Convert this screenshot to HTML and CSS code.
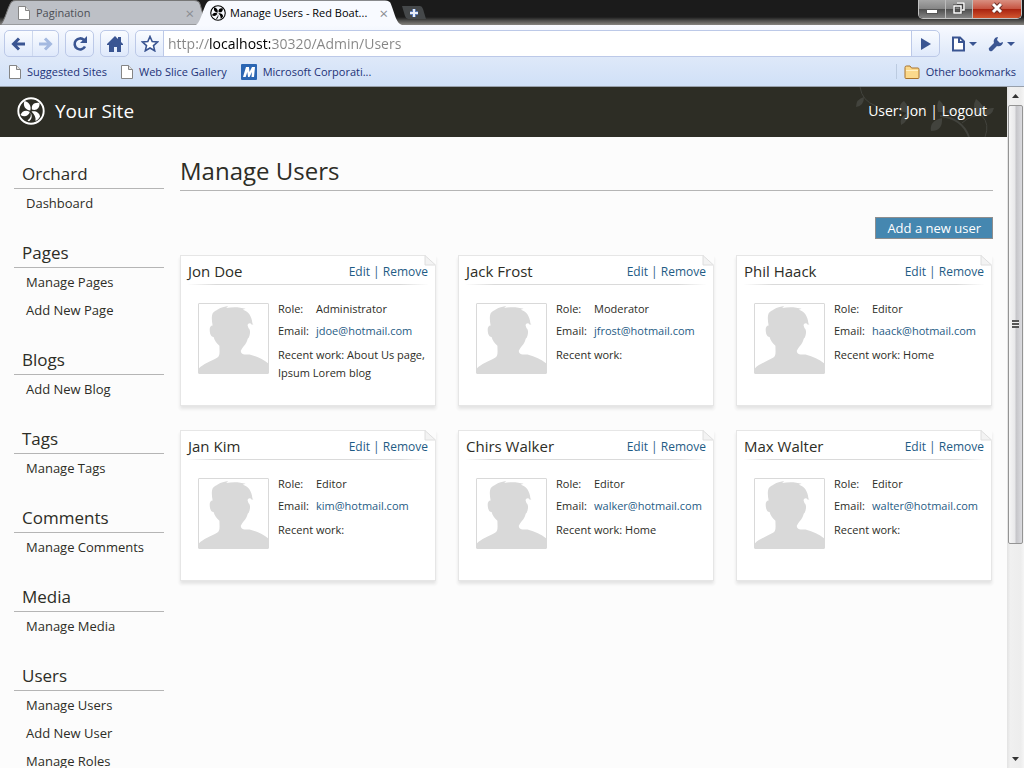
FILE: index.html
```html
<!DOCTYPE html>
<html lang="en">
<head>
<meta charset="utf-8">
<title>Manage Users - Red Boat</title>
<link rel="stylesheet" href="styles.css">
</head>
<body>
<svg class="sprite" aria-hidden="true">
  <symbol id="page" viewBox="0 0 12 14"><path d="M.5.5h7l4 4v9H.5z" fill="#fff" stroke="#858585"/><path d="M7.5.5v4h4" fill="#e4e4e4" stroke="#858585"/></symbol>
  <symbol id="orchard" viewBox="0 0 28 28"><circle cx="14" cy="14" r="12.7" fill="none" stroke="currentColor" stroke-width="1.9"/><g fill="currentColor"><path d="M13.300 13.500C8.500 13 5.500 9 7.500 4c4.500 1 7 5 5.800 9.500z"/><path d="M15 12.500C14 8 17 5 22.500 6c.5 5-3 8-7.500 6.500z"/><path d="M12.800 15c-1 4-5.500 5.500-9.300 3 1.500-4 5.500-5.500 9.300-3z"/><path d="M14.500 14.500c4-1 8 1 8.500 5-1 2-2.500 3.500-4.500 4.500.5-4-1-6.500-4-9.500z"/><path d="M13.500 15.500c1 3 0 6-3 8l1.500.8c3-2 3.500-5.500 1.500-8.800z"/></g></symbol>
  <symbol id="avatar" viewBox="0 0 71 71"><path fill="#d9d9d9" d="M0 71v-5c4-4 12-7 19-11 3-2 2-7 2-12-3-3-5-5-6-9-3 0-4-4-4-8 0-2 1-4 3-4-1-6-2-13 3-15 3-2 6-4 13-5l-2 2c7-1 14-1 20 1l-3 1c6 2 9 6 10 14l1 1h-2c-1-2-4-1-4 1l1 3c2 1 2 6 0 10-1 0-1 2-2 4-2 4-4 5-6 9 0 4 4 4 9 4 8 2 14 5 19 9v10z"/></symbol>
  <symbol id="fold" viewBox="0 0 12 11"><path d="M1 0h11v11z" fill="#fcfcfc"/><path d="M1 .5v9.500h10.500z" fill="#f3f3f3" stroke="#dedede"/></symbol>
</svg>

<header class="titlebar">
  <div class="tabs">
    <button class="tab">
      <svg class="tab-shape" viewBox="0 0 206 24" preserveAspectRatio="none"><path d="M0 24C5 22 8 4 12 1.500Q13 .5 16 .5H194Q199 .5 200 4L206 24z" fill="#bdc0c6" stroke="#777"/></svg>
      <svg class="ico-page"><use href="#page"/></svg><span class="tab-title">Pagination</span><span class="tab-x">×</span>
    </button>
    <button class="tab tab-active">
      <svg class="tab-shape" viewBox="0 0 206 24" preserveAspectRatio="none"><path d="M0 24C5 22 8 4 12 1.500Q13 .5 16 .5H189Q194 .5 195 4C199 14 200 22 206 24z" fill="#f8faff"/></svg>
      <svg class="ico-fav"><use href="#orchard"/></svg><span class="tab-title">Manage Users - Red Boat...</span><span class="tab-x">×</span>
    </button>
    <button class="new-tab" aria-label="New tab"><svg width="24" height="15" viewBox="0 0 24 15"><path d="M0 1h18q2 0 3 3l3 10H6q-2 0-3-3z" fill="#45484a"/><path d="M12 4v8M8 8h8" stroke="#5b7ab5" stroke-width="4"/><path d="M12 4v8M8 8h8" stroke="#e8edf8" stroke-width="2"/></svg></button>
  </div>
  <div class="win">
    <button aria-label="Minimize"><svg width="12" height="12"><rect x=".5" y="7.500" width="11" height="4" fill="#fff" stroke="#555"/></svg></button>
    <button aria-label="Restore"><svg width="12" height="12"><path d="M4 1h7v7H9M1 4h7v7H1z" fill="none" stroke="#444" stroke-width="3"/><path d="M4 1h7v7H9M1 4h7v7H1z" fill="none" stroke="#fff" stroke-width="1.500"/></svg></button>
    <button class="close" aria-label="Close"><svg width="13" height="12"><path d="M2 2l8 8M10 2l-8 8" stroke="#6d3028" stroke-width="5"/><path d="M2 2l8 8M10 2l-8 8" stroke="#fff" stroke-width="3"/></svg></button>
  </div>
</header>

<div class="chrome">
  <div class="toolbar">
    <div class="group">
      <button aria-label="Back"><svg width="16" height="14"><path d="M14 7H3M8 1.500L2.500 7 8 12.500" fill="none" stroke="#3a5592" stroke-width="3"/></svg></button>
      <button class="divided" aria-label="Forward"><svg width="16" height="14"><path d="M1 7h11M7 1.500L12.500 7 7 12.500" fill="none" stroke="#a4b9e0" stroke-width="3"/></svg></button>
    </div>
    <div class="group"><button aria-label="Reload"><svg width="16" height="16"><path d="M13 10.500A5.500 5.500 0 1 1 12 4" fill="none" stroke="#3a5592" stroke-width="2.600"/><path d="M15 0v7H8z" fill="#3a5592"/></svg></button></div>
    <div class="group"><button aria-label="Home"><svg width="16" height="16"><path d="M8 0l3 3V1h3v5l2 2v1h-2v7h-4v-5H7v5H2V9H0V8z" fill="#3a5592"/></svg></button></div>
    <div class="group address">
      <button aria-label="Bookmark"><svg width="18" height="17"><path d="M9 1.500l2.200 5 5.300.5-4 3.600 1.200 5.200L9 13l-4.700 2.800 1.200-5.200L1.500 7l5.300-.5z" fill="#fff" stroke="#3a5592" stroke-width="1.600"/></svg></button>
      <input class="url" type="text" aria-label="Address" value="http://localhost:30320/Admin/Users">
      <button aria-label="Go"><svg width="10" height="12"><path d="M0 0l10 6-10 6z" fill="#3a5592"/></svg></button>
    </div>
    <button class="tool" aria-label="Page menu"><svg width="25" height="16"><path d="M1 1.500h7l4 4V14.500H1z" fill="#fff" stroke="#3a5592" stroke-width="2"/><path d="M7 1v5h5" fill="none" stroke="#3a5592" stroke-width="2"/><path d="M17 6h8l-4 4z" fill="#3a5592"/></svg></button>
    <button class="tool" aria-label="Settings menu"><svg width="27" height="16"><path d="M10 1L9 4l3 3 3-1c0 3-3 5-6 4l-5 5q-2 1-3-1t1-3l4-4C5 4 7 1 10 1z" fill="#3a5592"/><path d="M19 6h8l-4 4z" fill="#3a5592"/></svg></button>
  </div>
  <nav class="bookmarks">
    <a href="#"><svg class="ico-page"><use href="#page"/></svg>Suggested Sites</a>
    <a href="#"><svg class="ico-page"><use href="#page"/></svg>Web Slice Gallery</a>
    <a href="#"><svg width="16" height="16"><rect width="16" height="16" rx="1" fill="#2b66b3"/><path d="M2 13L5 3h3l.5 5L11 3h3l-1 10h-2.500l.5-5-2.500 5H7l-.7-5-1.600 5z" fill="#fff"/></svg>Microsoft Corporati...</a>
    <a class="other" href="#"><svg width="16" height="14"><path d="M1 12.500V2.500Q1 1 2.500 1H6l1.500 2H14q1 0 1 1.500v8q0 1-1 1H2q-1 0-1-1z" fill="#fbd98c" stroke="#a8722c"/><path d="M2 5.500h12" stroke="#fff0c4"/></svg>Other bookmarks</a>
  </nav>
</div>

<div class="viewport">
  <div class="app">
    <header class="site">
      <svg class="logo"><use href="#orchard"/></svg>
      <span class="site-name">Your Site</span>
      <svg class="vine" width="150" height="50" viewBox="0 0 150 50"><g fill="#42433d"><path d="M6 20q0-8 8-10 0 9-8 10z"/><path d="M50 24q-1-8 4-10 6 6 3 12z"/><path d="M51 38q-2-8 6-12 2 8-6 12z"/><path d="M88 25q-2-8 1-12 7 6 5 12z"/><path d="M81 44q-2-10 11-13 1 13-11 13z"/><path d="M96 25q5-6 10-2-4 5-10 2z"/><path d="M126 27q-4-8 0-15 9 6 8 15z"/><path d="M134 29q1-9 10-8-2 8-10 8z"/></g><path d="M10 0q2 14 16 19M56 26q12 2 20-6M112 36q10-9 20-7 8 8 3 21" fill="none" stroke="#42433d"/><path d="M90 29q22 2 29 21" fill="none" stroke="#42433d" stroke-width="2"/></svg>
      <div class="account">User: <a href="#">Jon</a> | <a href="#">Logout</a></div>
    </header>
    <div class="columns">
      <nav class="side">
        <section><h2>Orchard</h2><a href="#">Dashboard</a></section>
        <section><h2>Pages</h2><a href="#">Manage Pages</a><a href="#">Add New Page</a></section>
        <section><h2>Blogs</h2><a href="#">Add New Blog</a></section>
        <section><h2>Tags</h2><a href="#">Manage Tags</a></section>
        <section><h2>Comments</h2><a href="#">Manage Comments</a></section>
        <section><h2>Media</h2><a href="#">Manage Media</a></section>
        <section><h2>Users</h2><a href="#">Manage Users</a><a href="#">Add New User</a><a href="#">Manage Roles</a></section>
      </nav>
      <main>
        <h1>Manage Users</h1>
        <button class="add">Add a new user</button>
        <div class="cards">
          <article class="card"><svg class="fold"><use href="#fold"/></svg>
            <header><h3>Jon Doe</h3><span><a href="#">Edit</a> | <a href="#">Remove</a></span></header>
            <div class="body"><svg class="avatar"><use href="#avatar"/></svg><div class="info"><dl><dt>Role:</dt><dd>Administrator</dd><dt>Email:</dt><dd><a href="#">jdoe@hotmail.com</a></dd></dl><p>Recent work: About Us page, Ipsum Lorem blog</p></div></div>
          </article>
          <article class="card"><svg class="fold"><use href="#fold"/></svg>
            <header><h3>Jack Frost</h3><span><a href="#">Edit</a> | <a href="#">Remove</a></span></header>
            <div class="body"><svg class="avatar"><use href="#avatar"/></svg><div class="info"><dl><dt>Role:</dt><dd>Moderator</dd><dt>Email:</dt><dd><a href="#">jfrost@hotmail.com</a></dd></dl><p>Recent work:</p></div></div>
          </article>
          <article class="card"><svg class="fold"><use href="#fold"/></svg>
            <header><h3>Phil Haack</h3><span><a href="#">Edit</a> | <a href="#">Remove</a></span></header>
            <div class="body"><svg class="avatar"><use href="#avatar"/></svg><div class="info"><dl><dt>Role:</dt><dd>Editor</dd><dt>Email:</dt><dd><a href="#">haack@hotmail.com</a></dd></dl><p>Recent work: Home</p></div></div>
          </article>
          <article class="card"><svg class="fold"><use href="#fold"/></svg>
            <header><h3>Jan Kim</h3><span><a href="#">Edit</a> | <a href="#">Remove</a></span></header>
            <div class="body"><svg class="avatar"><use href="#avatar"/></svg><div class="info"><dl><dt>Role:</dt><dd>Editor</dd><dt>Email:</dt><dd><a href="#">kim@hotmail.com</a></dd></dl><p>Recent work:</p></div></div>
          </article>
          <article class="card"><svg class="fold"><use href="#fold"/></svg>
            <header><h3>Chirs Walker</h3><span><a href="#">Edit</a> | <a href="#">Remove</a></span></header>
            <div class="body"><svg class="avatar"><use href="#avatar"/></svg><div class="info"><dl><dt>Role:</dt><dd>Editor</dd><dt>Email:</dt><dd><a href="#">walker@hotmail.com</a></dd></dl><p>Recent work: Home</p></div></div>
          </article>
          <article class="card"><svg class="fold"><use href="#fold"/></svg>
            <header><h3>Max Walter</h3><span><a href="#">Edit</a> | <a href="#">Remove</a></span></header>
            <div class="body"><svg class="avatar"><use href="#avatar"/></svg><div class="info"><dl><dt>Role:</dt><dd>Editor</dd><dt>Email:</dt><dd><a href="#">walter@hotmail.com</a></dd></dl><p>Recent work:</p></div></div>
          </article>
        </div>
      </main>
    </div>
  </div>
  <div class="scrollbar" aria-hidden="true">
    <svg width="7" height="4"><path d="M0 4l3.500-4L7 4z" fill="#333"/></svg>
    <div class="track"><div class="thumb"><i></i></div></div>
    <svg width="7" height="4"><path d="M0 0l3.500 4L7 0z" fill="#333"/></svg>
  </div>
</div>
</body>
</html>
```
FILE: styles.css
```css
* { box-sizing: border-box; }
body {
  margin: 0;
  height: 100vh;
  display: flex;
  flex-direction: column;
  overflow: hidden;
  background: #fcfcfc;
  color: #2d2d26;
  font-family: "Open Sans", "Noto Sans", sans-serif;
  font-size: 13px;
}
button { border: 0; padding: 0; background: none; font: inherit; color: inherit; }
a { color: inherit; text-decoration: none; }
h1, h2, h3, p, dl, dd { margin: 0; font-weight: 400; }
svg { flex: none; display: block; }
.sprite { position: absolute; width: 0; height: 0; }

.titlebar {
  display: flex;
  justify-content: space-between;
  height: 25px;
  flex: none;
  background: linear-gradient(#1b1b1b 0 68%, #4c4c4a 82%, #85837f);
}
.tabs { display: flex; font-size: 11px; color: #000; }
.tab {
  position: relative;
  isolation: isolate;
  display: flex;
  align-items: center;
  width: 206px;
  height: 25px;
  padding: 0 12px 0 18px;
  color: #4c4f55;
  text-align: left;
}
.tab-active { margin-left: -10px; padding: 0 14px; color: #000; }
.tab-shape { position: absolute; inset: 0; width: 100%; height: 100%; z-index: -1; }
.tab-title { flex: 1; white-space: nowrap; }
.tab-x { color: #8a8d92; font-size: 15px; line-height: 16px; }
.ico-page { width: 12px; height: 14px; margin-right: 6px; }
.ico-fav { width: 16px; height: 16px; margin-right: 4px; }
.new-tab { margin-top: 5px; align-self: flex-start; }
.win {
  display: flex;
  height: 19px;
  margin-right: 2px;
  border: 1px solid #c2c2c2;
  border-top: 0;
  border-radius: 0 0 5px 5px;
  overflow: hidden;
}
.win button {
  display: flex;
  justify-content: center;
  align-items: center;
  width: 27px;
  padding-bottom: 2px;
  background: linear-gradient(#a5a5a5, #858585 50%, #4f4f4f 52%, #858585);
  border-right: 1px solid #bbb;
}
.win .close { width: 48px; border: 0; background: linear-gradient(#d98f80, #c65340 50%, #a92410 52%, #d1552f); }

.chrome { flex: none; background: linear-gradient(#f8faff, #dfe9f9 50%, #d0e0f7); border-bottom: 1px solid #98a0ab; }
.toolbar { display: flex; gap: 6px; padding: 5px 9px 0 4px; }
.group {
  display: flex;
  height: 27px;
  border: 1px solid #bcc9e8;
  border-radius: 5px;
  background: linear-gradient(#fafcff, #dfe9fb);
  overflow: hidden;
}
.group button { display: flex; align-items: center; justify-content: center; width: 27px; }
.group .divided { width: 26px; border-left: 1px solid #cdd8ee; }
.address { flex: 1; margin-right: 1px; }
.url {
  flex: 1;
  min-width: 0;
  border: 0;
  border-inline: 1px solid #bcc9e8;
  padding: 0 4px;
  font: 14px "Open Sans", "Noto Sans", sans-serif;
  color: transparent;
  background:
    linear-gradient(90deg, #858585 46px, #000 46px 106px, #858585 106px) text,
    #fff;
}
.tool { display: flex; align-items: center; margin-left: 5px; }
.bookmarks { display: flex; gap: 14px; align-items: center; height: 29px; padding: 0 8px 0 9px; font-size: 11px; color: #1d3277; }
.bookmarks a { display: flex; align-items: center; white-space: nowrap; }
.bookmarks svg { margin-right: 6px; }
.bookmarks .other { margin-left: auto; padding-left: 7px; border-left: 1px solid #bccbe0; }

.viewport { flex: 1; min-height: 0; display: flex; }
.app { flex: 1; min-width: 0; overflow: hidden; }
.site {
  position: relative;
  display: flex;
  align-items: center;
  height: 50px;
  padding: 0 20px 3px 17px;
  background: #2d2d25;
  color: #fff;
}
.logo { width: 28px; height: 28px; margin-right: 10px; }
.site-name { font-size: 19px; }
.vine { position: absolute; right: 7px; top: 0; }
.account { position: relative; margin-left: auto; font-size: 14px; }
.columns { display: flex; gap: 16px; padding: 21px 14px 0; }
.side { width: 150px; flex: none; }
.side section { margin-bottom: 20px; }
.side h2 { height: 31px; padding-left: 8px; border-bottom: 1px solid #b5b5b5; font-size: 17px; line-height: 31px; }
.side a { display: block; padding-left: 12px; line-height: 28px; white-space: nowrap; }
main { flex: 1; min-width: 0; display: flex; flex-direction: column; }
h1 { height: 33px; border-bottom: 1px solid #b5b5b5; font-size: 24px; line-height: 26px; }
.add {
  align-self: flex-end;
  height: 22px;
  margin: 26px 0 16px;
  padding: 0 11px;
  border: 1px solid #8e8e8e;
  background: #4587b0;
  color: #fff;
  font-size: 13px;
}
.cards { display: grid; grid-template-columns: repeat(3, minmax(0, 1fr)); gap: 24px 22px; padding-right: 1px; }
.card {
  position: relative;
  min-height: 151px;
  padding: 0 8px;
  border: 1px solid #e6e6e6;
  background: #fff;
  box-shadow: 0 3px 3px #e4e4e4;
}
.fold { position: absolute; top: -1px; right: -1px; width: 12px; height: 11px; }
.card header {
  display: flex;
  justify-content: space-between;
  align-items: center;
  height: 29px;
  margin: 0 -1px;
  padding-top: 2px;
  border-bottom: 1px solid;
  border-image: linear-gradient(90deg, #fff, #dadada 12%, #dadada 88%, #fff) 1;
}
.card h3 { font-size: 15px; }
.card header span { font-size: 12px; }
.card a, .card header span { color: #1f5c85; }
.body { display: flex; gap: 9px; padding: 18px 0 0 9px; }
.avatar { width: 71px; height: 71px; border: 1px solid #d9d9d9; border-radius: 1px; }
.info { min-width: 0; margin: -5px -6px 0 0; font-size: 11px; }
dl { display: grid; grid-template-columns: 38px auto; line-height: 22px; white-space: nowrap; }
.info p { margin-top: 4px; line-height: 18px; }

.scrollbar {
  display: flex;
  flex-direction: column;
  align-items: center;
  width: 17px;
  flex: none;
  padding: 7px 0;
  background: linear-gradient(90deg, #e3e3e3, #f0f0f0 20%, #ededed 80%, #f5f5f5);
}
.track { flex: 1; width: 15px; margin: 7px 0; }
.thumb {
  display: flex;
  align-items: center;
  justify-content: center;
  height: 68%;
  border: 1px solid #949494;
  border-radius: 2px;
  background: linear-gradient(90deg, #f6f6f6, #e8e8ea 45%, #c5c5c9 55%, #dcdce0);
}
.thumb i { width: 7px; height: 8px; background: repeating-linear-gradient(#555 0 2px, #eee 2px 3px); }
```
